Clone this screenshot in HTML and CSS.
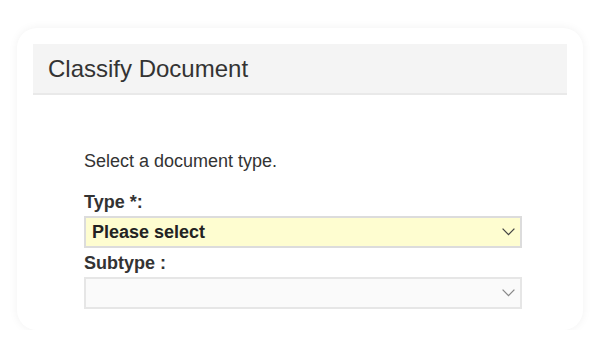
FILE: index.html
```html
<!DOCTYPE html>
<html lang="en">
<head>
  <meta charset="UTF-8" />
  <title>Classify Document</title>
  <link rel="stylesheet" href="styles.css">
</head>
<body>

  <div class="card">
    <div class="card-header">
      <h1>Classify Document</h1>
    </div>

    <div class="card-body">
      <p class="hint">Select a document type.</p>

      <label class="field-label" for="docType">Type *:</label>
      <div class="select-wrap type">
        <select id="docType">
          <option value="">Please select</option>
        </select>
        <svg class="chevron" width="13" height="8" viewBox="0 0 13 8"><path d="M0.6 0.6 L6.5 6.6 L12.4 0.6" fill="none" stroke="#444" stroke-width="1.3"/></svg>
      </div>

      <label class="field-label" for="docSubtype">Subtype :</label>
      <div class="select-wrap subtype">
        <select id="docSubtype" disabled>
          <option value=""></option>
        </select>
        <svg class="chevron" width="13" height="8" viewBox="0 0 13 8"><path d="M0.6 0.6 L6.5 6.6 L12.4 0.6" fill="none" stroke="#888" stroke-width="1.3"/></svg>
      </div>
    </div>
  </div>

</body>
</html>
```

FILE: styles.css
```css
body {
  font-family: "Liberation Sans", Arial, sans-serif;
  background: #ffffff;
  margin: 0;
  padding: 28px 33px 0 17px;
  color: #333;
}

.card {
  background: #ffffff;
  border-radius: 20px;
  padding: 16px 16px 21px;
  box-shadow: 0 0 10px rgba(0, 0, 0, 0.06);
}

.card-header {
  background: #f4f4f4;
  border-bottom: 2px solid #e9e9e9;
  height: 49px;
  padding: 0 15px;
  display: flex;
  align-items: center;
}

.card-header h1 {
  margin: 0;
  font-size: 24px;
  font-weight: normal;
  color: #333;
}

.card-body {
  padding: 56px 45px 0 51px;
}

.hint {
  margin: 0 0 21px;
  font-size: 18px;
  line-height: 20px;
  color: #333;
}

.field-label {
  display: block;
  font-size: 18px;
  line-height: 20px;
  font-weight: bold;
  color: #333;
  margin-bottom: 4px;
}

.select-wrap {
  position: relative;
  height: 32px;
  margin-bottom: 5px;
}

.select-wrap select {
  -webkit-appearance: none;
  appearance: none;
  width: 100%;
  height: 32px;
  box-sizing: border-box;
  border: 2px solid #dcdcdc;
  border-radius: 0;
  padding: 0 6px;
  font-family: "Liberation Sans", Arial, sans-serif;
  font-size: 18px;
  font-weight: bold;
  color: #222;
  outline: none;
}

.select-wrap.type select {
  background: #fefdd0;
}

.select-wrap.subtype {
  margin-bottom: 0;
}

.select-wrap.subtype select {
  background: #f8f8f8;
}

.chevron {
  position: absolute;
  right: 7px;
  top: 12px;
  pointer-events: none;
}
```
